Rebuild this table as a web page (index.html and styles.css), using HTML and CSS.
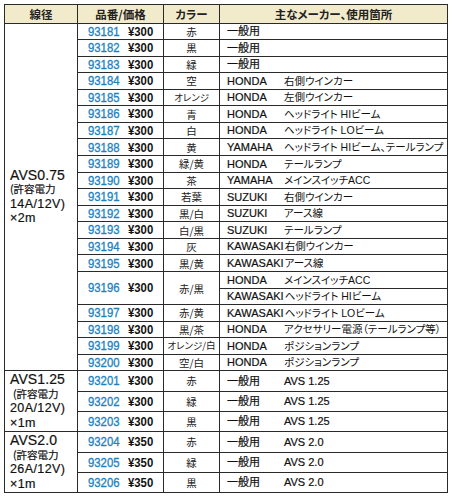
FILE: index.html
```html
<!DOCTYPE html>
<html lang="ja">
<head>
<meta charset="utf-8">
<link rel="stylesheet" href="styles.css">
</head>
<body>
<table class="spec">
  <colgroup>
    <col class="c-size"><col class="c-no"><col class="c-color"><col class="c-use">
  </colgroup>
  <thead>
    <tr class="head">
      <th>線径</th><th>品番/価格</th><th>カラー</th><th>主なメーカー、使用箇所</th>
    </tr>
  </thead>
  <tbody>
    <tr class="r">
      <td class="size" rowspan="21"><div class="big">AVS0.75</div><div class="jp">(許容電力</div><div class="mid">14A/12V)</div><div class="mid">×2m</div></td>
      <td class="no"><span class="num">93181</span><span class="yen">¥300</span></td><td class="col">赤</td><td class="use"><span class="mk">一般用</span></td>
    </tr>
    <tr class="r"><td class="no"><span class="num">93182</span><span class="yen">¥300</span></td><td class="col">黒</td><td class="use"><span class="mk">一般用</span></td></tr>
    <tr class="r"><td class="no"><span class="num">93183</span><span class="yen">¥300</span></td><td class="col">緑</td><td class="use"><span class="mk">一般用</span></td></tr>
    <tr class="r"><td class="no"><span class="num">93184</span><span class="yen">¥300</span></td><td class="col">空</td><td class="use"><span class="mk">HONDA</span><span class="ds">右側ウインカー</span></td></tr>
    <tr class="r"><td class="no"><span class="num">93185</span><span class="yen">¥300</span></td><td class="col sm">オレンジ</td><td class="use"><span class="mk">HONDA</span><span class="ds">左側ウインカー</span></td></tr>
    <tr class="r"><td class="no"><span class="num">93186</span><span class="yen">¥300</span></td><td class="col">青</td><td class="use"><span class="mk">HONDA</span><span class="ds">ヘッドライト HIビーム</span></td></tr>
    <tr class="r"><td class="no"><span class="num">93187</span><span class="yen">¥300</span></td><td class="col">白</td><td class="use"><span class="mk">HONDA</span><span class="ds">ヘッドライト LOビーム</span></td></tr>
    <tr class="r"><td class="no"><span class="num">93188</span><span class="yen">¥300</span></td><td class="col">黄</td><td class="use"><span class="mk">YAMAHA</span><span class="ds">ヘッドライト HIビーム、テールランプ</span></td></tr>
    <tr class="r"><td class="no"><span class="num">93189</span><span class="yen">¥300</span></td><td class="col">緑/黄</td><td class="use"><span class="mk">HONDA</span><span class="ds">テールランプ</span></td></tr>
    <tr class="r"><td class="no"><span class="num">93190</span><span class="yen">¥300</span></td><td class="col">茶</td><td class="use"><span class="mk">YAMAHA</span><span class="ds">メインスイッチACC</span></td></tr>
    <tr class="r"><td class="no"><span class="num">93191</span><span class="yen">¥300</span></td><td class="col">若葉</td><td class="use"><span class="mk">SUZUKI</span><span class="ds">右側ウインカー</span></td></tr>
    <tr class="r"><td class="no"><span class="num">93192</span><span class="yen">¥300</span></td><td class="col">黒/白</td><td class="use"><span class="mk">SUZUKI</span><span class="ds">アース線</span></td></tr>
    <tr class="r"><td class="no"><span class="num">93193</span><span class="yen">¥300</span></td><td class="col">白/黒</td><td class="use"><span class="mk">SUZUKI</span><span class="ds">テールランプ</span></td></tr>
    <tr class="r"><td class="no"><span class="num">93194</span><span class="yen">¥300</span></td><td class="col">灰</td><td class="use"><span class="mk">KAWASAKI</span><span class="ds">右側ウインカー</span></td></tr>
    <tr class="r"><td class="no"><span class="num">93195</span><span class="yen">¥300</span></td><td class="col">黒/黄</td><td class="use"><span class="mk">KAWASAKI</span><span class="ds">アース線</span></td></tr>
    <tr class="r"><td class="no" rowspan="2"><span class="num">93196</span><span class="yen">¥300</span></td><td class="col" rowspan="2">赤/黒</td><td class="use"><span class="mk">HONDA</span><span class="ds">メインスイッチACC</span></td></tr>
    <tr class="r"><td class="use"><span class="mk">KAWASAKI</span><span class="ds">ヘッドライト HIビーム</span></td></tr>
    <tr class="r"><td class="no"><span class="num">93197</span><span class="yen">¥300</span></td><td class="col">赤/黄</td><td class="use"><span class="mk">KAWASAKI</span><span class="ds">ヘッドライト LOビーム</span></td></tr>
    <tr class="r"><td class="no"><span class="num">93198</span><span class="yen">¥300</span></td><td class="col">黒/茶</td><td class="use"><span class="mk">HONDA</span><span class="ds">アクセサリー電源（テールランプ等）</span></td></tr>
    <tr class="r"><td class="no"><span class="num">93199</span><span class="yen">¥300</span></td><td class="col sm">オレンジ/白</td><td class="use"><span class="mk">HONDA</span><span class="ds">ポジションランプ</span></td></tr>
    <tr class="r"><td class="no"><span class="num">93200</span><span class="yen">¥300</span></td><td class="col">空/白</td><td class="use"><span class="mk">HONDA</span><span class="ds">ポジションランプ</span></td></tr>

    <tr class="t">
      <td class="size" rowspan="3"><div class="big">AVS1.25</div><div class="jp ind">(許容電力</div><div class="mid">20A/12V)</div><div class="mid">×1m</div></td>
      <td class="no"><span class="num">93201</span><span class="yen">¥300</span></td><td class="col">赤</td><td class="use"><span class="mk">一般用</span><span class="ds lat">AVS 1.25</span></td>
    </tr>
    <tr class="t"><td class="no"><span class="num">93202</span><span class="yen">¥300</span></td><td class="col">緑</td><td class="use"><span class="mk">一般用</span><span class="ds lat">AVS 1.25</span></td></tr>
    <tr class="t"><td class="no"><span class="num">93203</span><span class="yen">¥300</span></td><td class="col">黒</td><td class="use"><span class="mk">一般用</span><span class="ds lat">AVS 1.25</span></td></tr>

    <tr class="t">
      <td class="size" rowspan="3"><div class="big">AVS2.0</div><div class="jp ind">(許容電力</div><div class="mid">26A/12V)</div><div class="mid">×1m</div></td>
      <td class="no"><span class="num">93204</span><span class="yen">¥350</span></td><td class="col">赤</td><td class="use"><span class="mk">一般用</span><span class="ds lat">AVS 2.0</span></td>
    </tr>
    <tr class="t"><td class="no"><span class="num">93205</span><span class="yen">¥350</span></td><td class="col">緑</td><td class="use"><span class="mk">一般用</span><span class="ds lat">AVS 2.0</span></td></tr>
    <tr class="t"><td class="no"><span class="num">93206</span><span class="yen">¥350</span></td><td class="col">黒</td><td class="use"><span class="mk">一般用</span><span class="ds lat">AVS 2.0</span></td></tr>
  </tbody>
</table>
</body>
</html>
```

FILE: styles.css
```css
html, body {
  margin: 0;
  padding: 0;
  background: #fff;
}
body {
  font-family: "Liberation Sans", "Noto Sans CJK JP", sans-serif;
  color: #1a1a1a;
}
.spec {
  margin: 4px 0 0 4px;
  border-collapse: collapse;
  table-layout: fixed;
  width: 443px;
  border: 1.5px solid #222;
  font-feature-settings: "palt";
}
.c-size { width: 73px; }
.c-no { width: 86px; }
.c-color { width: 56px; }
.c-use { width: 228px; }

.spec th, .spec td {
  border: 1px solid #2a2a2a;
  padding: 0;
  vertical-align: middle;
  white-space: nowrap;
  overflow: hidden;
}
.head { height: 18.5px; }
.head th {
  background: #f2ebcb;
  font-family: "Noto Sans CJK JP", sans-serif;
  font-size: 11.5px;
  font-weight: bold;
  line-height: 14px;
  color: #222;
  text-align: center;
}
.r { height: 16.57px; }
.t { height: 20.33px; }

.size {
  padding-left: 5px !important;
  color: #111;
  -webkit-text-stroke: 0.2px #111;
}
.size div { line-height: 14.5px; }
.size .big { font-size: 14px; letter-spacing: 0.1px; }
.size .jp { font-family: "Noto Sans CJK JP", sans-serif; font-size: 10.5px; }
.size .jp.ind { padding-left: 3px; }
.size .mid { font-size: 12.5px; letter-spacing: 0.4px; }

.no {
  padding-left: 10px !important;
  line-height: 14px;
}
.num, .yen {
  display: inline-block;
  transform: scaleX(0.84);
  transform-origin: left center;
  font-size: 13.5px;
  vertical-align: middle;
}
.num { width: 40px; color: #1b82c4; -webkit-text-stroke: 0.35px #1b82c4; }
.yen { font-weight: bold; color: #111; }

.col {
  text-align: center;
  font-family: "Noto Sans CJK JP", sans-serif;
  font-size: 10.5px;
  line-height: 13px;
  color: #222;
}
.col.sm { font-size: 9.5px; }

.use {
  padding-left: 7px !important;
  font-size: 11px;
  line-height: 13px;
  color: #111;
}
.mk { display: inline-block; min-width: 56px; margin-right: 1px; vertical-align: middle; -webkit-text-stroke: 0.2px #111; }
.ds { display: inline-block; vertical-align: middle; font-size: 10.5px; }
.ds.lat { font-size: 11px; -webkit-text-stroke: 0.2px #111; }
```
